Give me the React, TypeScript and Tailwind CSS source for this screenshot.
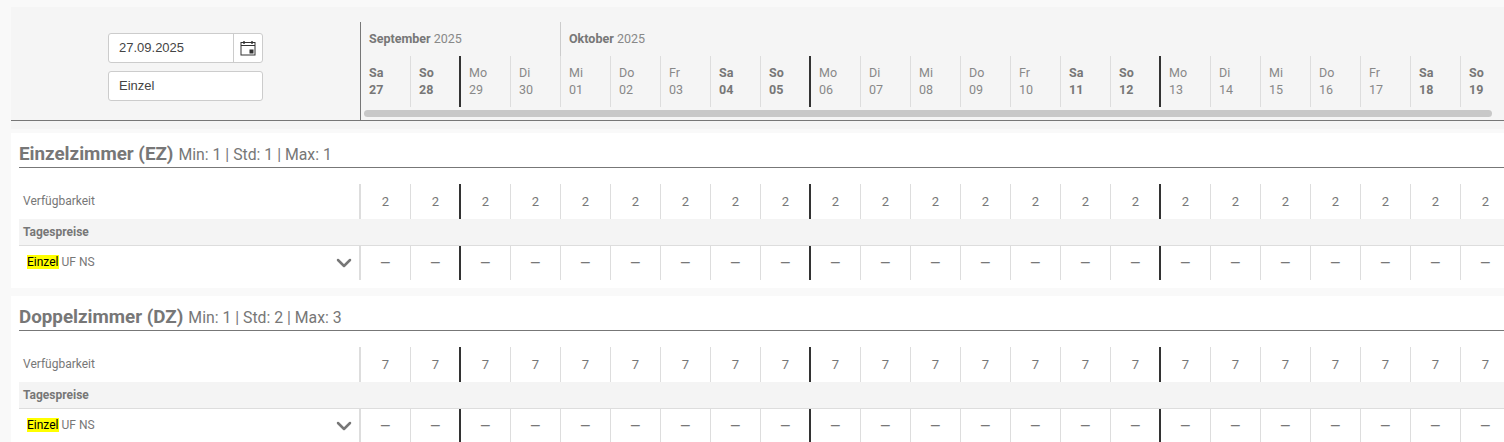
import { ChevronDown } from "lucide-react";

type Day = { name: string; num: string };

const days: Day[] = [
  ["Sa", "27"], ["So", "28"], ["Mo", "29"], ["Di", "30"], ["Mi", "01"], ["Do", "02"], ["Fr", "03"], ["Sa", "04"],
  ["So", "05"], ["Mo", "06"], ["Di", "07"], ["Mi", "08"], ["Do", "09"], ["Fr", "10"], ["Sa", "11"], ["So", "12"],
  ["Mo", "13"], ["Di", "14"], ["Mi", "15"], ["Do", "16"], ["Fr", "17"], ["Sa", "18"], ["So", "19"],
].map(([name, num]) => ({ name, num }));

const isWeekend = (d: Day) => d.name === "Sa" || d.name === "So";

const CalendarIcon = () => (
  <svg width="16" height="16" viewBox="0 0 16 16" fill="none">
    <rect x="1" y="2.5" width="14" height="12.5" stroke="#333" strokeWidth="1" />
    <path d="M1 5.5h14" stroke="#333" />
    <path d="M4 1v3M12 1v3" stroke="#333" strokeWidth="1.4" />
    <rect x="9.5" y="9.5" width="4" height="4" fill="#333" />
  </svg>
);

// Mondays and the first column start a pixel early so their 2px rule sits on the week boundary
const cellBorder = (d: Day, i: number) => {
  if (i === 0) return "w-[51px] border-l-2 border-[#ddd]";
  if (d.name === "Mo") return "w-[51px] -ml-px border-l-2 border-[#333]";
  return "w-[50px] border-l border-[#ddd]";
};

const RoomCard = ({ name, info, avail }: { name: string; info: string; avail: string }) => (
  <div className="bg-white pl-2 pt-[8px] h-[155px] shrink-0 overflow-hidden">
    <div className="h-[27px] border-b border-[#777] flex items-baseline gap-[5px] text-[#777] leading-[26px] whitespace-nowrap">
      <span className="text-[18.8px] font-bold">{name}</span>
      <span className="text-[15.8px]">{info}</span>
    </div>
    <div className="mt-[16px] flex h-[35px]">
      <div className="w-[340px] shrink-0 pl-1 text-[12px] text-[#777] leading-[34px]">Verfügbarkeit</div>
      {days.map((d, i) => (
        <div key={i} className={`shrink-0 text-center text-[13px] text-[#777] leading-[35px] ${cellBorder(d, i)}`}>
          {avail}
        </div>
      ))}
    </div>
    <div className="h-[27px] bg-[#f4f4f4] border-b border-[#ddd] pl-1 text-[12px] font-bold text-[#777] leading-[26px]">
      Tagespreise
    </div>
    <div className="flex h-[34px]">
      <div className="w-[340px] shrink-0 pl-2 pr-[3px] flex items-center justify-between text-[12px] text-[#777]">
        <span className="-mt-[3px]">
          <span className="bg-[#ffff00] text-black">Einzel</span> UF NS
        </span>
        <ChevronDown size={24} strokeWidth={2.5} className="text-[#777]" />
      </div>
      {days.map((d, i) => (
        <div key={i} className={`shrink-0 text-center text-[18px] text-[#777] leading-[34px] ${cellBorder(d, i)}`}>
          –
        </div>
      ))}
    </div>
  </div>
);

export default function App() {
  return (
    <div className="h-[442px] overflow-hidden bg-[#f9f9f9] pl-[11px] pt-[7px] font-['Roboto',sans-serif]">
      <div className="h-[122px] bg-[#f5f5f5]">
        <div className="flex h-[114px] border-b border-[#777] overflow-hidden">
          <div className="w-[349px] shrink-0 pl-[97px] pt-[26px]">
            <div className="flex h-[30px] w-[155px] rounded-[3px] border border-[#ccc] bg-white">
              <div className="flex-1 pl-[10px] text-[13px] leading-[28px] text-[#444] font-['Liberation_Sans',sans-serif]">27.09.2025</div>
              <div className="w-[29px] border-l border-[#ccc] flex items-center justify-center">
                <CalendarIcon />
              </div>
            </div>
            <div className="mt-2 h-[30px] w-[155px] rounded-[3px] border border-[#ccc] bg-white pl-[10px] text-[13px] leading-[28px] text-[#444] font-['Liberation_Sans',sans-serif]">
              Einzel
            </div>
          </div>
          <div className="relative mt-[15px] border-l border-[#777] grow min-w-0">
            <div className="flex h-[34px] text-[12.5px] text-[#888] leading-[34px]">
              <div className="w-[199px] pl-2 shrink-0">
                <b className="text-[#777]">September</b> 2025
              </div>
              <div className="border-l border-[#ccc] pl-2">
                <b className="text-[#777]">Oktober</b> 2025
              </div>
            </div>
            <div className="flex h-[51px] -ml-px">
              {days.map((d, i) => (
                <div
                  key={i}
                  className={`shrink-0 pl-2 pt-[8px] text-[12.5px] leading-[17px] ${isWeekend(d) ? "font-bold text-[#777]" : "text-[#888]"} ${i === 0 ? "w-[50px] border-l border-transparent" : cellBorder(d, i)} ${d.num === "01" ? "border-[#ccc]" : ""}`}
                >
                  <div>{d.name}</div>
                  <div>{d.num}</div>
                </div>
              ))}
            </div>
            <div className="ml-[3px] mt-[3px] h-[7px] w-[1128px] rounded bg-[#c8c8c8]" />
          </div>
        </div>
      </div>
      <div className="mt-[4px] flex flex-col gap-[8px]">
        <RoomCard name="Einzelzimmer (EZ)" info="Min: 1 | Std: 1 | Max: 1" avail="2" />
        <RoomCard name="Doppelzimmer (DZ)" info="Min: 1 | Std: 2 | Max: 3" avail="7" />
      </div>
    </div>
  );
}
